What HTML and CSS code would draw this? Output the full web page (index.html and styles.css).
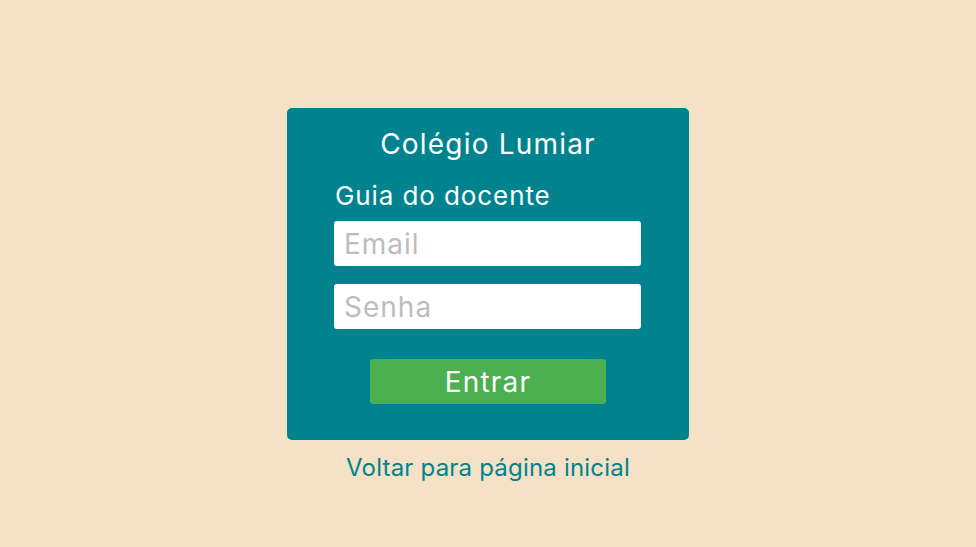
FILE: index.html
```html
<!DOCTYPE html>
<html lang="pt">
<head>
<meta charset="utf-8">
<title>Colégio Lumiar</title>
<link rel="stylesheet" href="styles.css">
</head>
<body>
<main class="page">
  <form class="card">
    <h1 class="title">Colégio Lumiar</h1>
    <div class="fields">
      <h2 class="subtitle">Guia do docente</h2>
      <input class="field field-email" type="email" placeholder="Email">
      <input class="field" type="password" placeholder="Senha">
    </div>
    <button class="btn" type="button">Entrar</button>
  </form>
  <a class="back" href="#">Voltar para página inicial</a>
</main>
</body>
</html>
```
FILE: styles.css
```css
* { box-sizing: border-box; }
html, body { margin: 0; padding: 0; }
body {
  background: #f5e1c5;
  font-family: Inter, "Noto Sans", sans-serif;
  height: 547px;
  overflow: hidden;
}
.page {
  display: flex;
  flex-direction: column;
  align-items: center;
  padding-top: 108px;
}
.card {
  width: 402px;
  height: 332px;
  background: #00838f;
  border-radius: 5px;
  padding: 18px 48px 0 47px;
  display: flex;
  flex-direction: column;
  align-items: center;
}
.title {
  margin: 0 0 0 1px;
  font-weight: 400;
  font-size: 28px;
  line-height: 36px;
  letter-spacing: 1.2px;
  color: #ffffff;
}
.fields {
  width: 307px;
  display: flex;
  flex-direction: column;
  margin-top: 18px;
}
.subtitle {
  margin: 0 0 9px 1px;
  font-weight: 400;
  font-size: 26px;
  line-height: 32px;
  letter-spacing: 0.9px;
  color: #ffffff;
}
.field {
  width: 307px;
  height: 45px;
  border: none;
  border-radius: 3px;
  background: #ffffff;
  padding: 0 10px;
  font-family: inherit;
  font-size: 28px;
  letter-spacing: 1px;
  color: #333;
  outline: none;
}
.field::placeholder { color: #bdbdbd; }
.field-email { margin-bottom: 18px; }
.btn {
  margin-top: 30px;
  width: 236px;
  height: 45px;
  border: none;
  border-radius: 3px;
  background: #4caf50;
  color: #ffffff;
  font-family: inherit;
  font-size: 28px;
  letter-spacing: 1.2px;
  padding: 0 0 0 1px;
}
.back {
  margin-top: 13px;
  font-size: 24px;
  line-height: 30px;
  letter-spacing: 0.2px;
  color: #00838f;
  text-decoration: none;
}
```
